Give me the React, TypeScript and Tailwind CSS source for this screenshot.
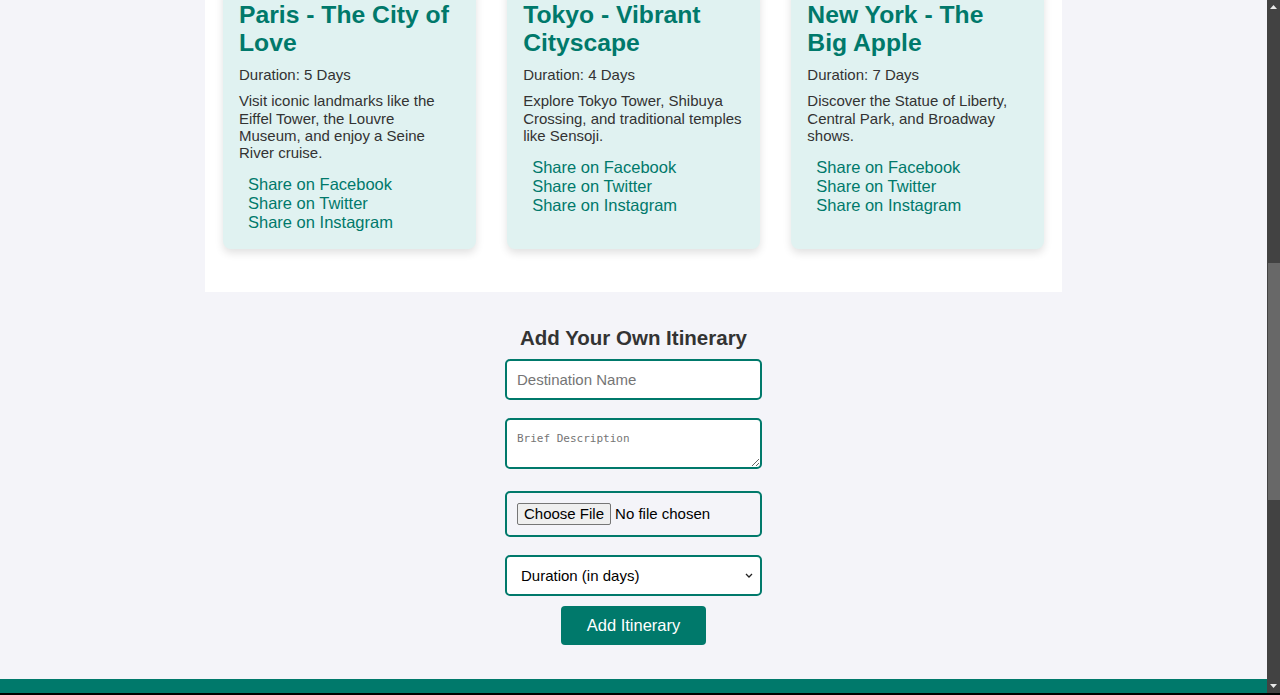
import React from "react";

type Trip = {
  title: string;
  days: number;
  text: string;
};

const trips: Trip[] = [
  {
    title: "Paris - The City of Love",
    days: 5,
    text: "Visit iconic landmarks like the Eiffel Tower, the Louvre Museum, and enjoy a Seine River cruise.",
  },
  {
    title: "Tokyo - Vibrant Cityscape",
    days: 4,
    text: "Explore Tokyo Tower, Shibuya Crossing, and traditional temples like Sensoji.",
  },
  {
    title: "New York - The Big Apple",
    days: 7,
    text: "Discover the Statue of Liberty, Central Park, and Broadway shows.",
  },
];

function TripCard({ trip }: { trip: Trip }) {
  return (
    <div className="bg-[#e0f2f1] rounded-[8px] shadow-[0_4px_8px_rgba(0,0,0,0.12)] px-4 pt-4 pb-[17px]">
      <h3 className="text-[24.7px] font-bold leading-[28px] text-[#00796b] mb-[9px]">
        {trip.title}
      </h3>
      <p className="text-[15px] leading-[1.15] text-[#333] mb-[9px]">
        Duration: {trip.days} Days
      </p>
      <p className="text-[15px] leading-[1.15] text-[#333] mb-[14px]">{trip.text}</p>
      <ul className="pl-[9px] text-[16.5px] leading-[19px] text-[#00796b]">
        <li>
          <a href="#">Share on Facebook</a>
        </li>
        <li>
          <a href="#">Share on Twitter</a>
        </li>
        <li>
          <a href="#">Share on Instagram</a>
        </li>
      </ul>
    </div>
  );
}

function Scrollbar() {
  return (
    <div className="w-[13px] h-full bg-[#424242] flex flex-col">
      <div className="h-[13px] flex items-center justify-center">
        <svg width="7" height="4" viewBox="0 0 7 4">
          <polygon points="3.5,0 7,4 0,4" fill="#e8e8e8" />
        </svg>
      </div>
      <div className="h-[250px]" />
      <div className="h-[237px] ml-[1px] bg-[#686868]" />
      <div className="flex-1" />
      <div className="h-[15px] flex items-start justify-center pt-[4px]">
        <svg width="7" height="4" viewBox="0 0 7 4">
          <polygon points="0,0 7,0 3.5,4" fill="#e8e8e8" />
        </svg>
      </div>
    </div>
  );
}

export default function App() {
  return (
    <div
      className="w-[1280px] h-[695px] overflow-hidden flex bg-[#f4f4f9] relative"
      style={{ fontFamily: '"Liberation Sans", Arial, sans-serif' }}
    >
      <div className="w-[1267px] h-full flex flex-col overflow-hidden">
        {/* Itinerary cards */}
        <section className="w-[857px] mx-auto -mt-[15px] bg-white px-[18px] pb-[43px]">
          <div className="grid grid-cols-3 gap-[31.5px]">
            {trips.map((t) => (
              <TripCard key={t.title} trip={t} />
            ))}
          </div>
        </section>

        {/* Add form */}
        <section className="flex flex-col items-center pt-[34px]">
          <h2 className="text-[20.5px] font-bold leading-[23px] text-[#333] mb-[10px]">
            Add Your Own Itinerary
          </h2>
          <form className="w-[257px] flex flex-col items-center">
            <input
              type="text"
              placeholder="Destination Name"
              className="w-full h-[41px] border-2 border-[#00796b] rounded-[5px] bg-white px-[10px] text-[15px] placeholder:text-[#757575] outline-none"
            />
            <textarea
              placeholder="Brief Description"
              className="w-full h-[51px] mt-[18px] border-2 border-[#00796b] rounded-[5px] bg-white px-[10px] pt-[12px] pb-[8px] text-[11px] leading-[13px] placeholder:text-[#757575] outline-none block"
              style={{ fontFamily: '"DejaVu Sans Mono", "Liberation Mono", monospace' }}
            />
            <div className="w-full h-[46px] mt-[22px] border-2 border-[#00796b] rounded-[5px] px-[10px] flex items-center text-[15px] text-black">
              <span className="h-[22px] px-[6px] flex items-center bg-[#efefef] border border-[#767676] rounded-[2px] mr-[4px]">
                Choose File
              </span>
              <span>No file chosen</span>
            </div>
            <div className="relative w-full mt-[18px]">
              <select
                defaultValue=""
                className="appearance-none w-full h-[41px] border-2 border-[#00796b] rounded-[5px] bg-white pl-[14px] pr-[24px] text-[15px] text-black outline-none"
              >
                <option value="">Duration (in days)</option>
                <option value="1">1</option>
                <option value="3">3</option>
                <option value="5">5</option>
                <option value="7">7</option>
              </select>
              <svg
                className="absolute right-[9px] top-[18px] pointer-events-none"
                width="8"
                height="5"
                viewBox="0 0 8 5"
              >
                <path d="M1 1 L4 4 L7 1" fill="none" stroke="#222" strokeWidth="1.3" />
              </svg>
            </div>
            <button
              type="button"
              className="w-[145px] h-[39px] mt-[10px] bg-[#00796b] text-white text-[16.5px] rounded-[4px]"
            >
              Add Itinerary
            </button>
          </form>
        </section>

        <div className="flex-1" />
        <footer className="h-[14px] bg-[#00796b] shrink-0" />
        <div className="h-[2px] shrink-0" />
      </div>
      <Scrollbar />
      <div className="absolute left-0 right-0 bottom-0 h-[2px] bg-black" />
    </div>
  );
}
